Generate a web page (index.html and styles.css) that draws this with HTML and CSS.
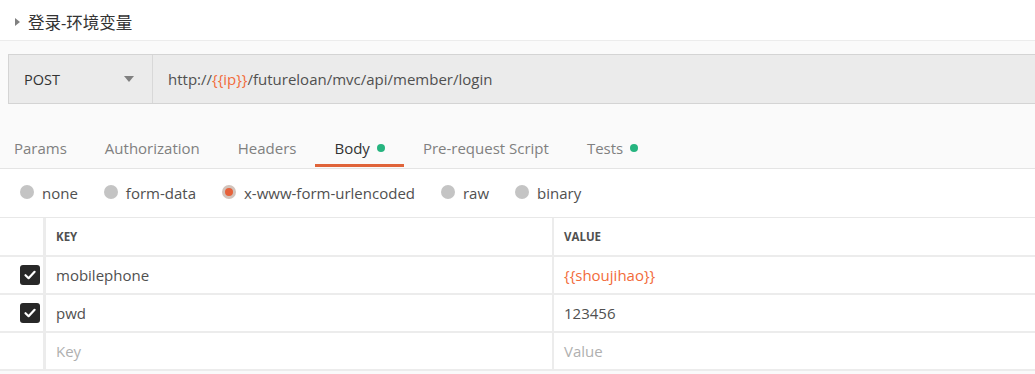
FILE: index.html
```html
<!DOCTYPE html>
<html lang="en">
<head>
    <meta charset="UTF-8">
    <title>登录-环境变量</title>
    <link rel="stylesheet" href="styles.css">
</head>
<body>
    <div class="title-bar">
        <span class="caret"></span>
        <span class="title">登录-环境变量</span>
    </div>

    <div class="url-bar">
        <div class="method">
            <span>POST</span>
            <span class="arrow"></span>
        </div>
        <div class="url">http://<span class="var">{{ip}}</span>/futureloan/mvc/api/member/login</div>
    </div>

    <div class="tabs">
        <div class="tab">Params</div>
        <div class="tab">Authorization</div>
        <div class="tab">Headers</div>
        <div class="tab active">Body <span class="dot"></span></div>
        <div class="tab">Pre-request Script</div>
        <div class="tab">Tests <span class="dot"></span></div>
    </div>

    <div class="body-types">
        <label class="radio"><span class="circle"></span>none</label>
        <label class="radio"><span class="circle"></span>form-data</label>
        <label class="radio"><span class="circle checked"></span>x-www-form-urlencoded</label>
        <label class="radio"><span class="circle"></span>raw</label>
        <label class="radio"><span class="circle"></span>binary</label>
    </div>

    <div class="kv-table">
        <div class="row head">
            <div class="check-col"></div>
            <div class="cell key">KEY</div>
            <div class="cell">VALUE</div>
        </div>
        <div class="row">
            <div class="check-col"><span class="checkbox"><svg viewBox="0 0 18 18" width="18" height="18"><path d="M4.5 9.2 L7.6 12.2 L13.6 5.8" fill="none" stroke="#fff" stroke-width="2.2" stroke-linecap="round" stroke-linejoin="round"/></svg></span></div>
            <div class="cell key">mobilephone</div>
            <div class="cell var">{{shoujihao}}</div>
        </div>
        <div class="row">
            <div class="check-col"><span class="checkbox"><svg viewBox="0 0 18 18" width="18" height="18"><path d="M4.5 9.2 L7.6 12.2 L13.6 5.8" fill="none" stroke="#fff" stroke-width="2.2" stroke-linecap="round" stroke-linejoin="round"/></svg></span></div>
            <div class="cell key">pwd</div>
            <div class="cell">123456</div>
        </div>
        <div class="row">
            <div class="check-col"></div>
            <div class="cell key placeholder">Key</div>
            <div class="cell placeholder">Value</div>
        </div>
    </div>
</body>
</html>
```

FILE: styles.css
```css
body { margin: 0; background: #fafafa; font-family: "Open Sans", "Noto Sans CJK SC", sans-serif; font-size: 15px; color: #505050; overflow: hidden; }

.title-bar { height: 41px; display: flex; align-items: center; padding: 4px 0 0 15px; box-sizing: border-box; background: #fff; border-bottom: 1px solid #ececec; }
.caret { width: 0; height: 0; border-top: 4px solid transparent; border-bottom: 4px solid transparent; border-left: 5px solid #808080; margin-right: 8px; }
.title { font-size: 16.5px; color: #333; }

.url-bar { display: flex; height: 48px; margin: 13px 0 0 8px; width: 1100px; border: 1px solid #d4d4d4; border-right: none; background: #ebebeb; }
.method { width: 144px; display: flex; align-items: center; justify-content: space-between; padding: 0 18px 0 15px; box-sizing: border-box; border-right: 1px solid #d8d8d8; color: #333; font-size: 14.5px; }
.arrow { width: 0; height: 0; border-left: 5px solid transparent; border-right: 5px solid transparent; border-top: 6px solid #808080; }
.url { display: flex; align-items: center; padding-left: 15px; color: #505050; }
.var { color: #f26b3a; }

.tabs { display: flex; height: 43px; margin-top: 22px; border-bottom: 1px solid #e4e4e4; box-sizing: border-box; }
.tab { padding: 5px 19px 0; display: flex; align-items: center; color: #808080; border-bottom: 3px solid transparent; margin-bottom: 1px; }
.tab:first-child { padding-left: 14px; }
.tab.active { color: #333; border-bottom-color: #e0643a; }
.dot { width: 8px; height: 8px; border-radius: 50%; background: #26b47f; margin-left: 7px; }

.body-types { display: flex; align-items: center; height: 48px; background: #fff; padding-left: 20px; gap: 26px; border-bottom: 1px solid #e8e8e8; }
.radio { display: flex; align-items: center; color: #505050; }
.circle { width: 14px; height: 14px; border-radius: 50%; background: #c4c4c4; margin-right: 8px; margin-top: -3px; box-sizing: border-box; }
.circle.checked { background: #e6613a; border: 3px solid #d2c3bb; }

.kv-table { background: #fff; }
.row { display: flex; height: 36px; border-bottom: 2px solid #ececec; }
.row.head { height: 37px; }
.check-col { width: 46px; border-right: 3px solid #ececec; display: flex; align-items: center; justify-content: flex-end; padding-right: 3px; box-sizing: border-box; }
.cell { display: flex; align-items: center; padding-left: 10px; color: #505050; }
.cell.key { width: 496px; border-right: 2px solid #ececec; }
.cell.var { color: #f26b3a; }
.head .cell { font-size: 11.5px; font-weight: 700; color: #505050; }
.cell.placeholder { color: #b0b0b0; }
.checkbox { width: 20px; height: 20px; border-radius: 3px; background: #282828; display: flex; align-items: center; justify-content: center; }
```
